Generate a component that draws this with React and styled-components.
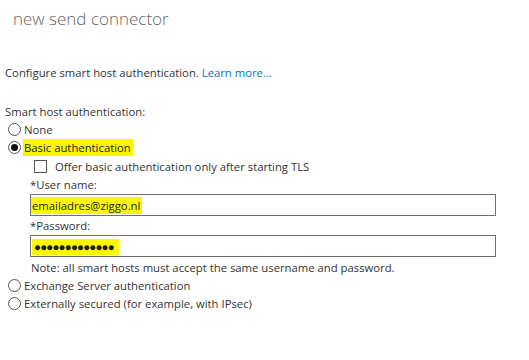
import React from 'react';
import styled, { createGlobalStyle } from 'styled-components';

const GlobalStyle = createGlobalStyle`
    body {
        margin: 0;
        background: #fff;
        font-family: "Open Sans", "Noto Sans", sans-serif;
    }
`

const Page = styled.div`
    width: 529px;
    height: 360px;
    padding-top: 5px;
    box-sizing: border-box;
    font-size: 11.3px;
    color: #333;
`

const Title = styled.h1`
    margin: 0 0 31px 13px;
    font-size: 17px;
    line-height: 28px;
    font-weight: 300;
    color: #666;
`

const Intro = styled.p`
    margin: 0 0 20px 5px;
    line-height: 18px;
`

const Link = styled.a`
    color: #0072c6;
    text-decoration: none;
`

const Section = styled.div`
    padding-left: 5px;
    display: flex;
    flex-direction: column;
`

const Line = styled.div`
    display: flex;
    align-items: center;
    height: 18px;
    padding-left: ${(p) => p.indent || 0}px;
    margin-top: ${(p) => p.gap || 0}px;
`

const Radio = styled.span`
    width: 11px;
    height: 11px;
    border: 1px solid #555;
    border-radius: 50%;
    margin: 0 3px;
    display: flex;
    align-items: center;
    justify-content: center;
    flex-shrink: 0;
    &::after {
        content: '';
        display: ${(p) => (p.checked ? 'block' : 'none')};
        width: 7px;
        height: 7px;
        border-radius: 50%;
        background: #111;
    }
`

const Checkbox = styled.span`
    width: 11px;
    height: 11px;
    border: 1px solid #555;
    margin-right: 8px;
    flex-shrink: 0;
`

const Mark = styled.span`
    display: inline-flex;
    align-items: center;
    height: 17px;
    background: #fbf700;
    color: #222;
    padding: 0 2px 0 1px;
    margin-left: -1px;
`

const Field = styled.div`
    margin: 1px 0 0 25px;
    width: 466px;
    height: 22px;
    border: 1px solid #707070;
    box-sizing: border-box;
    display: flex;
    align-items: center;
    padding-left: 1px;
`

const Dots = styled.span`
    display: inline-flex;
    align-items: center;
    height: 16px;
    background: #fbf700;
    color: #1a1a1a;
    font-size: 11.5px;
    letter-spacing: -0.8px;
    padding: 0 5px 0 2px;
    margin-top: 1px;
`

export default function App() {
    return (
        <>
            <GlobalStyle />
            <Page>
                <Title>new send connector</Title>
                <Intro>
                    Configure smart host authentication. <Link href="#">Learn more...</Link>
                </Intro>
                <Section>
                    <Line>Smart host authentication:</Line>
                    <Line><Radio />None</Line>
                    <Line><Radio checked /><Mark>Basic authentication</Mark></Line>
                    <Line indent={29} gap={1}><Checkbox />Offer basic authentication only after starting TLS</Line>
                    <Line indent={25}>*User name:</Line>
                    <Field><Mark>emailadres@ziggo.nl</Mark></Field>
                    <Line indent={25}>*Password:</Line>
                    <Field><Dots>●●●●●●●●●●●●●</Dots></Field>
                    <Line indent={26} gap={1}>Note: all smart hosts must accept the same username and password.</Line>
                    <Line><Radio />Exchange Server authentication</Line>
                    <Line><Radio />Externally secured (for example, with IPsec)</Line>
                </Section>
            </Page>
        </>
    );
}
